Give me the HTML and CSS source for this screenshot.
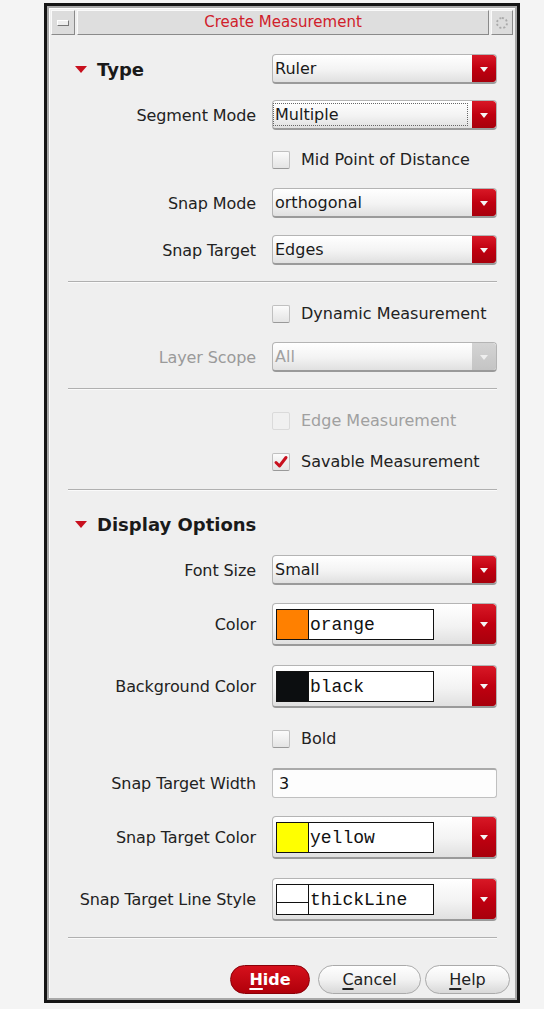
FILE: index.html
```html
<!DOCTYPE html>
<html>
<head>
<meta charset="utf-8">
<link rel="stylesheet" href="styles.css">
</head>
<body>
<div class="window">
  <div class="frame">
    <div class="titlebar">
      <div class="tb-btn"><span class="min-icon"></span></div>
      <div class="tb-title">Create Measurement</div>
      <div class="tb-btn tb-right"><span class="gear-icon"></span></div>
    </div>
    <div class="content">
      <div class="row h30 mt19">
        <div class="heading"><span class="tri"></span>Type</div>
        <div class="combo"><span class="val">Ruler</span><span class="arrow"></span></div>
      </div>
      <div class="row h30 mt16">
        <div class="label">Segment Mode</div>
        <div class="combo"><span class="val focus">Multiple</span><span class="arrow"></span></div>
      </div>
      <div class="row h18 mt20">
        <div></div>
        <div class="check"><span class="box"></span>Mid Point of Distance</div>
      </div>
      <div class="row h30 mt20">
        <div class="label">Snap Mode</div>
        <div class="combo"><span class="val">orthogonal</span><span class="arrow"></span></div>
      </div>
      <div class="row h30 mt17">
        <div class="label">Snap Target</div>
        <div class="combo"><span class="val">Edges</span><span class="arrow"></span></div>
      </div>
      <div class="sep mt16"></div>
      <div class="row h18 mt21">
        <div></div>
        <div class="check"><span class="box"></span>Dynamic Measurement</div>
      </div>
      <div class="row h30 mt20">
        <div class="label disabled">Layer Scope</div>
        <div class="combo disabled"><span class="val">All</span><span class="arrow"></span></div>
      </div>
      <div class="sep mt16"></div>
      <div class="row h18 mt21">
        <div></div>
        <div class="check disabled"><span class="box"></span>Edge Measurement</div>
      </div>
      <div class="row h18 mt23">
        <div></div>
        <div class="check"><span class="box checked"><svg viewBox="0 0 16 16" width="16" height="16"><path d="M3 8.5 L6.5 12 L13 3.5" fill="none" stroke="#c8101e" stroke-width="3" stroke-linecap="round" stroke-linejoin="round"/></svg></span>Savable Measurement</div>
      </div>
      <div class="sep mt19"></div>
      <div class="row h26 mt20">
        <div class="heading"><span class="tri"></span>Display Options</div>
        <div></div>
      </div>
      <div class="row h30 mt18">
        <div class="label">Font Size</div>
        <div class="combo"><span class="val">Small</span><span class="arrow"></span></div>
      </div>
      <div class="row h43 mt18">
        <div class="label">Color</div>
        <div class="combo color"><span class="cbox"><span class="sw sw-orange"></span><span class="mono">orange</span></span><span class="gapfill"></span><span class="arrow"></span></div>
      </div>
      <div class="row h43 mt19">
        <div class="label">Background Color</div>
        <div class="combo color"><span class="cbox"><span class="sw sw-black"></span><span class="mono">black</span></span><span class="gapfill"></span><span class="arrow"></span></div>
      </div>
      <div class="row h18 mt21">
        <div></div>
        <div class="check"><span class="box"></span>Bold</div>
      </div>
      <div class="row h30 mt21">
        <div class="label">Snap Target Width</div>
        <div class="input">3</div>
      </div>
      <div class="row h43 mt18">
        <div class="label">Snap Target Color</div>
        <div class="combo color"><span class="cbox"><span class="sw sw-yellow"></span><span class="mono">yellow</span></span><span class="gapfill"></span><span class="arrow"></span></div>
      </div>
      <div class="row h43 mt19">
        <div class="label">Snap Target Line Style</div>
        <div class="combo color"><span class="cbox"><span class="sw sw-line"></span><span class="mono">thickLine</span></span><span class="gapfill"></span><span class="arrow"></span></div>
      </div>
      <div class="sep mt16"></div>
      <div class="buttons">
        <div class="btn btn-red"><u>H</u>ide</div>
        <div class="btn btn-cancel"><u>C</u>ancel</div>
        <div class="btn btn-help"><u>H</u>elp</div>
      </div>
    </div>
  </div>
</div>
</body>
</html>
```

FILE: styles.css
```css
html, body {
  margin: 0;
  padding: 0;
  background: #f4f4f4;
  font-family: "DejaVu Sans", sans-serif;
}

.window {
  margin: 3px 0 0 44px;
  width: 470px;
  height: 994px;
  border: 3px solid #151515;
  background: #a8a8a8;
}

.frame {
  margin: 2px 2px 0 2px;
  height: 990px;
  background: #efefef;
  border-left: 1px solid #fff;
  border-top: 1px solid #fff;
  box-sizing: border-box;
  display: flex;
  flex-direction: column;
}

.titlebar {
  display: flex;
  height: 25px;
  gap: 2px;
  padding: 1px 2px 0 1px;
  background: #efefef;
}

.tb-btn {
  width: 22px;
  height: 23px;
  background: #dcdcdc;
  border-top: 1px solid #fafafa;
  border-left: 1px solid #fafafa;
  border-right: 1px solid #8a8a8a;
  border-bottom: 1px solid #8a8a8a;
  display: flex;
  align-items: center;
  justify-content: center;
}

.tb-right {
  width: 20px;
}

.min-icon {
  width: 10px;
  height: 4px;
  background: #eee;
  border-bottom: 1px solid #777;
  border-right: 1px solid #777;
  border-top: 1px solid #fff;
  border-left: 1px solid #fff;
}

.gear-icon {
  width: 8px;
  height: 8px;
  border-radius: 50%;
  border: 2px dotted #aaa;
}

.tb-title {
  flex: 1;
  height: 23px;
  background: #dedede;
  border-top: 1px solid #fafafa;
  border-left: 1px solid #fafafa;
  border-right: 1px solid #8a8a8a;
  border-bottom: 1px solid #8a8a8a;
  color: #d0202a;
  font-size: 15px;
  text-align: center;
  line-height: 23px;
}

.content {
  padding: 0 18px 0 18px;
  display: flex;
  flex-direction: column;
}

.row {
  display: grid;
  grid-template-columns: 1fr 225px;
  column-gap: 16px;
  align-items: center;
}

.h18 { height: 18px; }
.h26 { height: 26px; }
.h30 { height: 30px; }
.h43 { height: 43px; }

.mt16 { margin-top: 16px; }
.mt17 { margin-top: 17px; }
.mt18 { margin-top: 18px; }
.mt19 { margin-top: 19px; }
.mt20 { margin-top: 20px; }
.mt21 { margin-top: 21px; }
.mt23 { margin-top: 23px; }

.label {
  text-align: right;
  font-size: 16px;
  letter-spacing: -0.1px;
  color: #222;
  white-space: nowrap;
}

.label.disabled {
  color: #9a9a9a;
}

.heading {
  display: flex;
  align-items: center;
  font-size: 18px;
  font-weight: bold;
  color: #1a1a1a;
  white-space: nowrap;
}

.tri {
  width: 0;
  height: 0;
  border-left: 6px solid transparent;
  border-right: 6px solid transparent;
  border-top: 7px solid #c8101e;
  margin: 0 10px 0 7px;
}

.combo {
  height: 100%;
  box-sizing: border-box;
  display: flex;
  align-items: stretch;
  border: 1px solid #b4b4b4;
  border-bottom: 2px solid #9a9a9a;
  border-radius: 4px;
  background: linear-gradient(#ffffff, #f3f3f3 55%, #e0e0e0);
  overflow: hidden;
}

.val {
  flex: 1;
  display: flex;
  align-items: center;
  padding-left: 2px;
  font-size: 16px;
  color: #1a1a1a;
}

.val.focus {
  margin: 2px 4px 2px 0;
  padding-left: 1px;
  border: 1px dotted #666;
}

.arrow {
  width: 24px;
  background: linear-gradient(#d81826, #c00010 50%, #a8000c);
  position: relative;
  border-radius: 0 3px 3px 0;
}

.arrow::after {
  content: "";
  position: absolute;
  left: 8px;
  top: 50%;
  margin-top: -2px;
  border-left: 4px solid transparent;
  border-right: 4px solid transparent;
  border-top: 5px solid #f4f4f4;
}

.combo.disabled .val {
  color: #a0a0a0;
}

.combo.disabled .arrow {
  background: linear-gradient(#d4d4d4, #c4c4c4);
}

.combo.disabled .arrow::after {
  border-top-color: #eee;
}

.check {
  display: flex;
  align-items: center;
  font-size: 16px;
  color: #222;
  white-space: nowrap;
}

.check.disabled {
  color: #a0a0a0;
}

.box {
  width: 16px;
  height: 16px;
  margin-right: 11px;
  border: 1px solid #c0c0c0;
  border-bottom-color: #999;
  border-radius: 2px;
  background: linear-gradient(#fbfbfb, #e4e4e4);
  display: flex;
  align-items: center;
  justify-content: center;
}

.check.disabled .box {
  border-color: #dadada;
  background: #f0f0f0;
}

.sep {
  height: 1px;
  background: #b0b0b0;
  border-bottom: 1px solid #fafafa;
}

.combo.color {
  padding: 5px 0 4px 3px;
  gap: 0;
}

.cbox {
  width: 158px;
  box-sizing: border-box;
  border: 1px solid #111;
  background: #fff;
  display: flex;
  align-items: stretch;
}

.sw {
  width: 31px;
  border-right: 1px solid #111;
}

.sw-orange { background: #ff8000; }
.sw-black { background: #0c0e10; }
.sw-yellow { background: #ffff00; }
.sw-line {
  background: linear-gradient(#fff 0, #fff 58%, #111 58%, #111 calc(58% + 1px), #fff calc(58% + 1px));
}

.mono {
  font-family: "Liberation Mono", monospace;
  font-size: 18px;
  color: #111;
  display: flex;
  align-items: center;
  padding-left: 1px;
}

.gapfill {
  flex: 1;
}

.combo.color .arrow {
  margin: -5px 0 -4px 0;
}

.input {
  height: 30px;
  box-sizing: border-box;
  border: 1px solid #c0c0c0;
  border-top: 2px solid #aaa;
  border-radius: 3px;
  background: #fdfdfd;
  font-size: 16px;
  color: #111;
  padding-left: 6px;
  display: flex;
  align-items: center;
}

.buttons {
  margin-top: 26px;
  display: flex;
  justify-content: flex-end;
  margin-right: -13px;
}

.btn {
  height: 29px;
  box-sizing: border-box;
  border-radius: 15px;
  display: flex;
  align-items: center;
  justify-content: center;
  font-size: 16px;
  color: #222;
}

.btn u {
  text-decoration-thickness: 2px;
  text-underline-offset: 3px;
}

.btn-red {
  width: 80px;
  background: linear-gradient(#d6101c, #b0000a);
  border: 1px solid #8a0008;
  color: #fff;
  font-weight: bold;
  margin-right: 8px;
}

.btn-cancel {
  width: 103px;
  border: 1px solid #aaa;
  background: linear-gradient(#ffffff, #f2f2f2 50%, #d8d8d8);
  margin-right: 4px;
}

.btn-help {
  width: 85px;
  border: 1px solid #aaa;
  background: linear-gradient(#ffffff, #f2f2f2 50%, #d8d8d8);
}
```
